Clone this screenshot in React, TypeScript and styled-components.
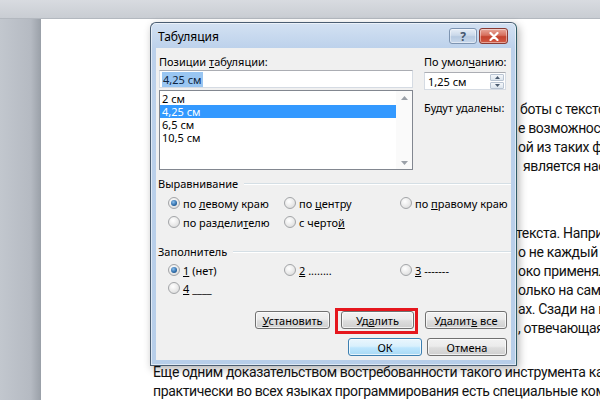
import React from 'react';
import styled, { createGlobalStyle } from 'styled-components';

const GlobalStyle = createGlobalStyle`
  html, body { margin: 0; padding: 0; }
  body { width: 600px; height: 400px; overflow: hidden; }
`;

// окно Word за диалогом
const Screen = styled.div`
  position: relative;
  width: 600px;
  height: 400px;
  overflow: hidden;
  display: grid;
  grid-template-rows: 19px 1fr;
  grid-template-columns: 41px 1fr;
  background: #bfc4cb;
`;

const TopStrip = styled.div`
  grid-column: 1 / 3;
  background: linear-gradient(#d8dbe0, #c9cdd3);
  border-bottom: 1px solid #b3b8bf;
`;

const Gutter = styled.div`
  background: linear-gradient(to right, #c2c7ce, #b5bac2 75%, #9aa0a8);
`;

const Page = styled.div`
  background: #fff;
  overflow: hidden;
  padding-top: 81px;
  font-family: Roboto, 'Noto Sans', sans-serif;
  font-size: 14px;
  letter-spacing: -0.35px;
  line-height: 19px;
  color: #111;
`;

const Paragraph = styled.div<{ $gap?: number }>`
  margin-top: ${({ $gap }) => $gap ?? 0}px;
`;

const Line = styled.div<{ $indent: number }>`
  white-space: nowrap;
  padding-left: ${({ $indent }) => $indent}px;
`;

// диалог
const Dialog = styled.div`
  position: absolute;
  left: 150px;
  top: 22px;
  width: 367px;
  height: 344px;
  box-sizing: border-box;
  display: flex;
  flex-direction: column;
  border: 1px solid #4a5d72;
  border-right-color: #2f5b66;
  border-radius: 6px 6px 0 0;
  background: linear-gradient(#d3e1f2 0, #bcd1eb 26px, #b7cee9 100%);
  box-shadow: inset 0 0 0 1px rgba(255, 255, 255, 0.55), 2px 3px 8px rgba(0, 0, 0, 0.3);
  font-family: 'Noto Sans', sans-serif;
  font-size: 11px;
  color: #000;
`;

const TitleBar = styled.div`
  height: 25px;
  display: flex;
  align-items: flex-start;
  padding: 0 8px 0 7px;
`;

const Title = styled.div`
  flex: 1;
  font-size: 12px;
  line-height: 14px;
  margin-top: 7px;
`;

const CaptionButton = styled.div<{ $close?: boolean }>`
  margin-top: 5px;
  width: ${({ $close }) => ($close ? 29 : 28)}px;
  height: 16px;
  box-sizing: border-box;
  margin-left: ${({ $close }) => ($close ? 2 : 0)}px;
  border: 1px solid ${({ $close }) => ($close ? '#8a3a32' : '#7d94b1')};
  border-radius: 3px;
  display: flex;
  align-items: center;
  justify-content: center;
  color: #44566e;
  font-size: 12px;
  font-weight: bold;
  background: ${({ $close }) =>
    $close
      ? 'linear-gradient(#e9a99c 0, #d7705e 45%, #c4432e 55%, #d25a45 100%)'
      : 'linear-gradient(#e7eef7 0, #cbd9ea 45%, #b6c9e0 55%, #c8d8ec 100%)'};
  box-shadow: inset 0 0 0 1px rgba(255, 255, 255, 0.45);
`;

const Body = styled.div`
  flex: 1;
  margin: 0 5px 5px 5px;
  background: #f0f0f0;
  padding: 0 4px 0 2px;
  display: flex;
  flex-direction: column;
`;

const TopSection = styled.div`
  display: flex;
`;

const Column = styled.div<{ $width: number; $offset: number }>`
  width: ${({ $width }) => $width}px;
  margin-left: ${({ $offset }) => $offset}px;
  display: flex;
  flex-direction: column;
`;

const Label = styled.div<{ $top: number }>`
  margin-top: ${({ $top }) => $top}px;
  line-height: 14px;
  white-space: nowrap;
`;

const TextBox = styled.div<{ $top: number }>`
  margin-top: ${({ $top }) => $top}px;
  height: 18px;
  box-sizing: border-box;
  background: #fff;
  border: 1px solid #d5dbe3;
  border-top-color: #abadb3;
  display: flex;
  align-items: center;
  padding-left: 2px;
`;

const Selection = styled.span`
  background: #99c6f2;
  color: #0c2440;
  padding: 1px 1px;
  line-height: 13px;
`;

const ListBox = styled.div`
  margin-top: 2px;
  height: 80px;
  box-sizing: border-box;
  border: 1px solid #828790;
  background: #fff;
  display: flex;
`;

const Items = styled.div`
  flex: 1;
  padding-top: 1px;
`;

const Item = styled.div<{ $selected?: boolean }>`
  height: 13px;
  line-height: 13px;
  padding-left: 2px;
  background: ${({ $selected }) => ($selected ? '#3399ff' : 'transparent')};
  color: ${({ $selected }) => ($selected ? '#fff' : '#000')};
`;

const ScrollBar = styled.div`
  width: 16px;
  display: flex;
  flex-direction: column;
  justify-content: space-between;
  align-items: center;
  padding: 5px 0 4px;
  background: #fafafa;
`;

const Spinner = styled(TextBox)`
  padding-left: 3px;
  justify-content: space-between;
  padding-right: 1px;
`;

const SpinButtons = styled.div`
  display: flex;
  flex-direction: column;
  gap: 1px;
`;

const SpinButton = styled.div`
  width: 14px;
  height: 7px;
  border: 1px solid #b9c4d2;
  border-radius: 1px;
  box-sizing: border-box;
  background: linear-gradient(#f4f7fa, #dde5ee);
  display: flex;
  align-items: center;
  justify-content: center;
`;

const GroupHeader = styled.div<{ $top: number }>`
  margin-top: ${({ $top }) => $top}px;
  display: flex;
  align-items: center;
  gap: 6px;
  line-height: 14px;
  &::after {
    content: '';
    flex: 1;
    border-top: 1px solid #d5dfe5;
    border-bottom: 1px solid #ffffff;
    margin-right: -4px;
  }
`;

const RadioGrid = styled.div<{ $top: number; $rowGap: number }>`
  margin-top: ${({ $top }) => $top}px;
  padding-left: 10px;
  display: grid;
  grid-template-columns: 116px 116px auto;
  row-gap: ${({ $rowGap }) => $rowGap}px;
`;

const RadioOption = styled.div`
  display: flex;
  align-items: center;
  gap: 3px;
  height: 14px;
  white-space: nowrap;
`;

const RadioDot = styled.span<{ $checked?: boolean }>`
  position: relative;
  flex: none;
  width: 12px;
  height: 12px;
  border-radius: 50%;
  box-sizing: border-box;
  border: 1px solid #a3a5a8;
  background: radial-gradient(circle at 40% 35%, #ffffff 0, #e9e9e9 55%, #d0d1d3 100%);
  &::after {
    content: '';
    position: absolute;
    inset: 2px;
    border-radius: 50%;
    background: ${({ $checked }) =>
      $checked ? 'radial-gradient(circle at 40% 35%, #8cc0ee 0, #2c6aa7 60%, #173f6b 100%)' : 'transparent'};
  }
`;

const ButtonRow = styled.div<{ $top: number; $gap: number }>`
  margin-top: ${({ $top }) => $top}px;
  display: flex;
  align-items: flex-start;
  justify-content: flex-end;
  gap: ${({ $gap }) => $gap}px;
`;

const Button = styled.div<{ $width: number; $default?: boolean }>`
  width: ${({ $width }) => $width}px;
  height: 18px;
  box-sizing: border-box;
  border: 1px solid ${({ $default }) => ($default ? '#3c7fb1' : '#707070')};
  border-radius: 3px;
  background: ${({ $default }) =>
    $default
      ? 'linear-gradient(#eaf6fd 0, #d9f0fc 45%, #bee6fd 55%, #a7d9f5 100%)'
      : 'linear-gradient(#f2f2f2 0, #ebebeb 45%, #dddddd 55%, #cfcfcf 100%)'};
  box-shadow: inset 0 0 0 1px rgba(255, 255, 255, 0.7);
  display: flex;
  align-items: center;
  justify-content: center;
  white-space: nowrap;
`;

// красная рамка, которой на скриншоте обведена кнопка
const Marker = styled.div`
  display: flex;
  border: 3px solid #e5161d;
  padding: 0 1px 2px 3px;
  margin: -3px -4px -5px -6px;
`;

const Arrow = ({ up }: { up?: boolean }) => (
  <svg width="7" height="4" viewBox="0 0 7 4">
    <path d={up ? 'M0 4 L3.5 0 L7 4 Z' : 'M0 0 L3.5 4 L7 0 Z'} fill="#9aa0a8" />
  </svg>
);

const SmallArrow = ({ up }: { up?: boolean }) => (
  <svg width="5" height="3" viewBox="0 0 5 3">
    <path d={up ? 'M0 3 L2.5 0 L5 3 Z' : 'M0 0 L2.5 3 L5 0 Z'} fill="#4a5a6e" />
  </svg>
);

const CloseGlyph = () => (
  <svg width="10" height="9" viewBox="0 0 10 9">
    <path d="M1.5 1 L8.5 8 M8.5 1 L1.5 8" stroke="#fff" strokeWidth="2.2" strokeLinecap="round" />
  </svg>
);

export default function App() {
  return (
    <>
      <GlobalStyle />
      <Screen>
        <TopStrip />
        <Gutter />
        <Page>
          <Paragraph>
            <Line $indent={479}>боты с текстом в</Line>
            <Line $indent={477}>е возможности</Line>
            <Line $indent={477}>ой из таких функций</Line>
            <Line $indent={482}>является настройка</Line>
          </Paragraph>
          <Paragraph $gap={48}>
            <Line $indent={475}>текста. Например</Line>
            <Line $indent={477}>о не каждый</Line>
            <Line $indent={477}>око применяли</Line>
            <Line $indent={477}>олько на самых</Line>
            <Line $indent={477}>ах. Сзади на них</Line>
            <Line $indent={477}>, отвечающая за</Line>
          </Paragraph>
          <Paragraph $gap={25}>
            <Line $indent={112}>Еще одним доказательством востребованности такого инструмента как</Line>
            <Line $indent={112}>практически во всех языках программирования есть специальные команды</Line>
          </Paragraph>
        </Page>

        <Dialog>
          <TitleBar>
            <Title>Табуляция</Title>
            <CaptionButton>?</CaptionButton>
            <CaptionButton $close>
              <CloseGlyph />
            </CaptionButton>
          </TitleBar>
          <Body>
            <TopSection>
              <Column $width={254} $offset={1}>
                <Label $top={7}>
                  Позиции <u>т</u>абуляции:
                </Label>
                <TextBox $top={1}>
                  <Selection>4,25 см</Selection>
                </TextBox>
                <ListBox>
                  <Items>
                    <Item>2 см</Item>
                    <Item $selected>4,25 см</Item>
                    <Item>6,5 см</Item>
                    <Item>10,5 см</Item>
                  </Items>
                  <ScrollBar>
                    <Arrow up />
                    <Arrow />
                  </ScrollBar>
                </ListBox>
              </Column>
              <Column $width={82} $offset={11}>
                <Label $top={7}>
                  По умол<u>ч</u>анию:
                </Label>
                <Spinner $top={3}>
                  <span>1,25 см</span>
                  <SpinButtons>
                    <SpinButton>
                      <SmallArrow up />
                    </SpinButton>
                    <SpinButton>
                      <SmallArrow />
                    </SpinButton>
                  </SpinButtons>
                </Spinner>
                <Label $top={11}>Будут удалены:</Label>
              </Column>
            </TopSection>

            <GroupHeader $top={7}>Выравнивание</GroupHeader>
            <RadioGrid $top={5} $rowGap={5}>
              <RadioOption>
                <RadioDot $checked />
                <span>
                  по <u>л</u>евому краю
                </span>
              </RadioOption>
              <RadioOption>
                <RadioDot />
                <span>
                  по <u>ц</u>ентру
                </span>
              </RadioOption>
              <RadioOption>
                <RadioDot />
                <span>
                  по <u>п</u>равому краю
                </span>
              </RadioOption>
              <RadioOption>
                <RadioDot />
                <span>
                  по раздели<u>т</u>елю
                </span>
              </RadioOption>
              <RadioOption>
                <RadioDot />
                <span>
                  с черто<u>й</u>
                </span>
              </RadioOption>
            </RadioGrid>

            <GroupHeader $top={16}>Заполнитель</GroupHeader>
            <RadioGrid $top={4} $rowGap={4}>
              <RadioOption>
                <RadioDot $checked />
                <span>
                  <u>1</u> (нет)
                </span>
              </RadioOption>
              <RadioOption>
                <RadioDot />
                <span>
                  <u>2</u> ........
                </span>
              </RadioOption>
              <RadioOption>
                <RadioDot />
                <span>
                  <u>3</u> -------
                </span>
              </RadioOption>
              <RadioOption>
                <RadioDot />
                <span>
                  <u>4</u> ____
                </span>
              </RadioOption>
            </RadioGrid>

            <ButtonRow $top={16} $gap={11}>
              <Button $width={75}>
                <span>
                  <u>У</u>становить
                </span>
              </Button>
              <Marker>
                <Button $width={73}>
                  <span>
                    Уд<u>а</u>лить
                  </span>
                </Button>
              </Marker>
              <Button $width={82}>
                <span>
                  Удалит<u>ь</u> все
                </span>
              </Button>
            </ButtonRow>
            <ButtonRow $top={9} $gap={5}>
              <Button $width={74} $default>
                <span>ОК</span>
              </Button>
              <Button $width={80}>
                <span>Отмена</span>
              </Button>
            </ButtonRow>
          </Body>
        </Dialog>
      </Screen>
    </>
  );
}
